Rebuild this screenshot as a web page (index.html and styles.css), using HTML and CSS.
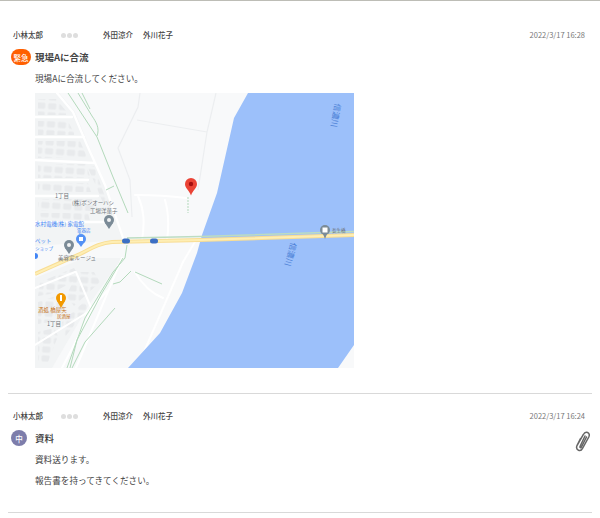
FILE: index.html
```html
<!DOCTYPE html>
<html lang="ja">
<head>
<meta charset="utf-8">
<title>連絡一覧</title>
<link rel="stylesheet" href="styles.css">
</head>
<body>
<main class="list">
  <article class="msg msg-first">
    <header class="meta">
      <span class="sender">小林太郎</span>
      <span class="dots"><i></i><i></i><i></i></span>
      <span class="names"><span>外田涼介</span><span>外川花子</span></span>
      <time class="date">2022/3/17 16:28</time>
    </header>
    <div class="title-row">
      <span class="badge badge-urgent">緊急</span>
      <h2 class="title">現場Aに合流</h2>
    </div>
    <p class="body">現場Aに合流してください。</p>
    <svg class="map" viewBox="35 93 319 275" width="319" height="275" aria-label="地図">
      <defs>
        <pattern id="houses" width="11" height="9" patternUnits="userSpaceOnUse" patternTransform="rotate(4)">
          <rect x="0.500" y="0.500" width="8" height="6" rx="1" fill="#e8eaec"/>
        </pattern>
      </defs>
      <rect x="35" y="93" width="319" height="275" fill="#f8f9fa"/>
      <path fill="#f2f4f5" d="M35 93H59L75 112L105 185L124 240L35 246Z"/>
      <path fill="#f2f4f5" d="M35 278L84 258L122 258L90 303L52 368H35Z"/>
      <g fill="url(#houses)">
        <path d="M38 99h18l10 12v4H38zM38 121h30l6 12v2H38zM38 141h42l6 14v3H38zM38 164h48l4 12v2H38zM38 183h50l3 9H38zM38 199h54l4 12H38zM38 213h50l2 8H38z"/>
        <path d="M88 168l6-2 10 28 8 12-6 4-10-24zM40 282l34-14 6 10-30 16-12 2zM78 272h16l6 10-26 24-8-10zM38 302l18-6 8 10-14 16-12 2zM38 332l16-4 4 8-10 26H38zM62 322l22-20 4 6-24 30z"/>
      </g>
      <g fill="none" stroke="#fff" stroke-linecap="round">
        <path stroke-width="2.300" d="M57 93L73 112L87 145L105 185L123 238M35 117H72M35 137H84M35 160L95 163M35 180H88M35 196H98M35 222H112"/>
        <path stroke-width="2" d="M76 272L92 310L62 368M108 290L88 312L35 345M35 288L75 272M122 258L76 368"/>
        <path stroke-width="2" d="M137 368L183 262L196 240M135 195c18 0 36 1 51 3M142 240c3-18 2-30-4-44M165 200c4 14 4 26 2 40M135 272c8 14 18 22 28 26"/>
      </g>
      <g fill="none" stroke="#eceef0" stroke-width="1.200">
        <path d="M140 93l-2 14L118 148L130 180L132 217M137 120L207 132M216 93L207 132L198 190"/>
      </g>
      <g fill="none" stroke="#b3d9bb" stroke-width="1">
        <path d="M68 93L97 137L113 177L128 213M78 93L92 116c4 6 8 12 5 20M82 93L90 109M106 190l8-4"/>
        <path d="M127 245L125 258L113 272L85 318L67 368M123 258L102 293L77 340L70 368M115 308L85 342L72 368M113 284L120 282L131 271M135 272L162 284"/>
        <path stroke-dasharray="2 1" d="M188 197v16"/>
      </g>
      <path fill="#9cc0fa" d="M248 93L234 118L217 193L202 235L197 253L182 293L160 333L128 368H338L354 345V93Z"/>
      <path fill="none" stroke="#bcdcc2" stroke-width="1.500" d="M127 238L200 236.500L354 231.500"/>
      <path fill="none" stroke="#f8dd94" stroke-width="4" d="M35 274L80 254C92 248 100 243 112 242L200 240L354 235"/>
      <path fill="none" stroke="#feeeb4" stroke-width="2" d="M35 274L80 254C92 248 100 243 112 242L200 240L354 235"/>
      <g class="road-shield">
        <rect x="122" y="238.500" width="8" height="5" rx="2.500"/>
        <rect x="150" y="238.500" width="8" height="5" rx="2.500"/>
      </g>
      <circle cx="109" cy="220" r="5" fill="#7b8b97"/><circle cx="109" cy="220" r="2" fill="#f1f3f4"/>
      <path fill="#7b8b97" d="M105 223l4 6 4-6z"/>
      <circle cx="81" cy="239" r="5" fill="#5491f5"/><rect x="79" y="237" width="4" height="4" fill="#fff"/>
      <path fill="#5491f5" d="M77.500 242l3.500 5 3.500-5z"/>
      <circle cx="69" cy="245" r="5" fill="#7b8b97"/><circle cx="69" cy="245" r="2" fill="#f1f3f4"/>
      <path fill="#7b8b97" d="M65 248l4 6 4-6z"/>
      <circle cx="35" cy="256" r="3" fill="#4285f4"/>
      <circle cx="61" cy="298" r="5" fill="#f29900"/>
      <path fill="#f29900" d="M57 301l4 7 4-7z"/><rect x="60" y="295" width="2" height="6" fill="#fff"/>
      <circle cx="325" cy="230" r="5" fill="#7b8b97"/><rect x="322.500" y="227.500" width="5" height="5" fill="#fff"/>
      <path fill="#7b8b97" d="M323 234l2 5 2-5z"/>
      <text class="lbl lbl-grey" x="55" y="198">1丁目</text>
      <text class="lbl lbl-grey" x="72" y="205">(株)ボンオーハシ</text>
      <text class="lbl lbl-grey" x="90" y="213">工場洋菓子</text>
      <text class="lbl lbl-blue" x="35" y="226">水村電機(株) 家電館</text>
      <text class="lbl lbl-blue lbl-sm" x="77" y="232">電器店</text>
      <text class="lbl lbl-blue" x="35" y="243">ペット</text>
      <text class="lbl lbl-blue lbl-sm" x="35" y="250">ショップ</text>
      <text class="lbl lbl-grey" x="58" y="260">美容室ルージュ</text>
      <text class="lbl lbl-orange" x="38" y="312">酒処 橋屋矢</text>
      <text class="lbl lbl-orange lbl-sm" x="57" y="318">居酒屋</text>
      <text class="lbl lbl-grey" x="47" y="326">1丁目</text>
      <text class="lbl lbl-grey lbl-sm" x="332" y="232">長生橋</text>
      <text class="lbl lbl-river" transform="translate(335 103) rotate(100)">信濃川</text>
      <text class="lbl lbl-river" transform="translate(291 242) rotate(105)">信濃川</text>
      <path fill="#ea4335" d="M191 178a6 6 0 0 0-6 6c0 4 4 6 6 11.500c2-5.500 6-7.500 6-11.500a6 6 0 0 0-6-6z"/>
      <circle cx="191" cy="184" r="2.200" fill="#a50e0e"/>
    </svg>
  </article>

  <article class="msg msg-second">
    <header class="meta">
      <span class="sender">小林太郎</span>
      <span class="dots"><i></i><i></i><i></i></span>
      <span class="names"><span>外田涼介</span><span>外川花子</span></span>
      <time class="date">2022/3/17 16:24</time>
    </header>
    <div class="title-row">
      <span class="badge badge-mid">中</span>
      <h2 class="title">資料</h2>
      <svg class="clip" viewBox="0 0 18 21" width="18" height="21" aria-label="添付">
        <path fill="none" stroke="#666" stroke-width="1.500" stroke-linecap="round" d="M6.500 7.500L3 14.500c-1 2.500 0 4 1.500 4.700c1.700.7 3.200-.2 4-1.800L14.800 6c1-2.200.4-3.800-1.200-4.500c-1.600-.7-3.200 0-4.200 2L3.300 14"/>
        <path fill="none" stroke="#666" stroke-width="1.500" stroke-linecap="round" d="M11 5L6 15.500c-.4 1 .8 1.600 1.400.6L12.500 6"/>
      </svg>
    </div>
    <p class="body">資料送ります。</p>
    <p class="body body-next">報告書を持ってきてください。</p>
  </article>
</main>
</body>
</html>
```

FILE: styles.css
```css
* { box-sizing: border-box; }

html, body {
  margin: 0;
  padding: 0;
  background: #fff;
}

body {
  width: 600px;
  height: 518px;
  overflow: hidden;
  border-top: 1px solid #bdbdb6;
  font-family: "Noto Sans CJK JP", "Noto Sans", sans-serif;
  color: #444;
}

.list {
  margin: 0 8px;
}

.msg {
  padding: 17px 0 26px;
  border-bottom: 1px solid #d9d9d9;
}

.msg-first {
  padding-top: 29px;
  padding-bottom: 25px;
}

.meta {
  display: flex;
  align-items: center;
  height: 10px;
  margin-left: 5px;
  font-size: 7.500px;
  font-weight: 500;
  line-height: 10px;
}

.sender {
  width: 48px;
}

.dots {
  display: flex;
  gap: 1px;
  width: 42px;
}

.dots i {
  width: 5px;
  height: 5px;
  border-radius: 50%;
  background: #dedede;
}

.names {
  display: flex;
  gap: 10px;
}

.date {
  margin-left: auto;
  margin-right: 7px;
  color: #777;
  font-size: 7.500px;
  font-weight: 400;
}

.title-row {
  display: flex;
  align-items: center;
  gap: 4px;
  margin-top: 9px;
  margin-left: 3px;
  height: 16px;
}

.badge {
  display: flex;
  align-items: center;
  justify-content: center;
  height: 16px;
  color: #fff;
  font-size: 7.500px;
  font-weight: 500;
}

.badge-urgent {
  width: 20px;
  border-radius: 8px;
  background: #ff5f00;
}

.badge-mid {
  width: 16px;
  margin-right: 4px;
  border-radius: 50%;
  background: #7d7dab;
}

.title {
  margin: 0;
  font-size: 9.500px;
  font-weight: 700;
  line-height: 16px;
}

.badge-mid + .title {
  font-weight: 500;
  color: #333;
}

.clip {
  margin-left: auto;
  margin-top: 6px;
}

.body {
  margin: 7px 0 0 27px;
  font-size: 8.600px;
  line-height: 12px;
}

.body-next {
  margin-top: 9px;
}

.map {
  display: block;
  margin: 9px 0 0 27px;
}

.lbl {
  font-family: "Noto Sans CJK JP", sans-serif;
  font-size: 5.500px;
}

.lbl-sm { font-size: 4.500px; }
.lbl-grey { fill: #70757a; }
.lbl-blue { fill: #4285f4; }
.lbl-orange { fill: #c5721a; }
.lbl-river { fill: #4a7fd6; font-size: 8px; }
.road-shield rect { fill: #3c6fc4; }
```
